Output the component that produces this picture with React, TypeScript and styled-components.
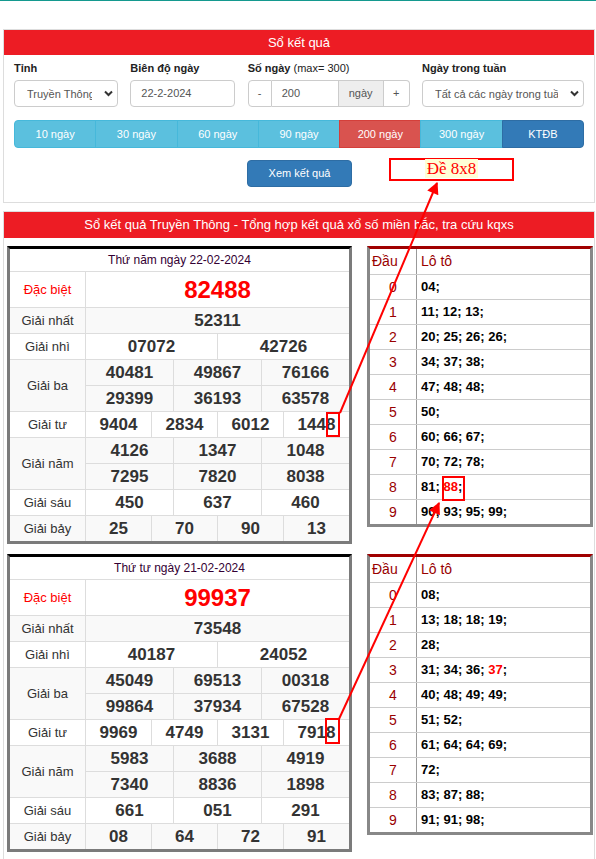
import React from 'react';
import styled, { createGlobalStyle } from 'styled-components';

const GlobalStyle = createGlobalStyle`
  html, body { margin: 0; padding: 0; background: #fff; }
  body {
    font-family: "Liberation Sans", Arial, sans-serif;
    font-size: 13px;
    color: #333;
  }
  * { box-sizing: border-box; }
`;

const Page = styled.div`
  position: relative;
  width: 596px;
  padding-bottom: 6px;
`;

const TopLine = styled.div`
  height: 1px;
  background: #14998f;
  margin-bottom: 28px;
`;

const Content = styled.div`
  padding: 0 1px 0 3px;
`;

const Panel = styled.div<{ $gap?: number }>`
  border: 1px solid #ddd;
  background: #fff;
  margin-top: ${p => p.$gap ?? 0}px;
`;

const PanelHead = styled.div<{ $h: number }>`
  background: #ed1c24;
  color: #fff;
  text-align: center;
  font-size: 13px;
  height: ${p => p.$h}px;
  line-height: ${p => p.$h}px;
  white-space: nowrap;
`;

const FormBody = styled.div`
  padding: 6px 10px 15px;
`;

const FieldRow = styled.div`
  display: grid;
  grid-template-columns: 104px 105px 162px 162px;
  justify-content: space-between;
`;

const Field = styled.div`
  display: flex;
  flex-direction: column;
`;

const FieldLabel = styled.div`
  font-size: 11px;
  font-weight: bold;
  line-height: 14px;
  color: #222;
  margin-bottom: 5px;
  white-space: nowrap;

  span { font-weight: normal; }
`;

const SelectBox = styled.div`
  display: flex;
  align-items: center;
  height: 27px;
  border: 1px solid #ccc;
  border-radius: 4px;
  padding: 0 4px 0 12px;
  color: #555;
  font-size: 11px;
  background: #fff;
`;

const SelectText = styled.span`
  flex: 1;
  overflow: hidden;
  white-space: nowrap;
`;

const Chevron = styled.svg`
  margin-left: 12px;
  flex: none;
`;

const TextInput = styled.div`
  height: 27px;
  border: 1px solid #ccc;
  border-radius: 4px;
  padding-left: 10px;
  line-height: 25px;
  color: #555;
  font-size: 11px;
`;

const InputGroup = styled.div`
  display: grid;
  grid-template-columns: 24px 67px 45px 26px;
  height: 27px;
`;

const GroupCell = styled.div<{ $addon?: boolean; $first?: boolean; $last?: boolean; $left?: boolean }>`
  border: 1px solid #ccc;
  border-left-width: ${p => (p.$first ? 1 : 0)}px;
  background: ${p => (p.$addon ? '#eee' : '#fff')};
  border-radius: ${p => (p.$first ? '4px 0 0 4px' : p.$last ? '0 4px 4px 0' : '0')};
  color: #555;
  font-size: 11px;
  line-height: 25px;
  text-align: ${p => (p.$left ? 'left' : 'center')};
  padding-left: ${p => (p.$left ? 10 : 0)}px;
`;

const RangeBar = styled.div`
  display: flex;
  margin-top: 13px;
`;

const RangeButton = styled.div<{ $tone: 'info' | 'danger' | 'primary' }>`
  flex: 1;
  height: 28px;
  line-height: 26px;
  text-align: center;
  color: #fff;
  font-size: 11px;
  background: ${p => (p.$tone === 'danger' ? '#d9534f' : p.$tone === 'primary' ? '#337ab7' : '#5bc0de')};
  border: 1px solid ${p => (p.$tone === 'danger' ? '#d43f3a' : p.$tone === 'primary' ? '#2e6da4' : '#46b8da')};
  margin-left: -1px;

  &:first-child { border-radius: 4px 0 0 4px; margin-left: 0; }
  &:last-child { border-radius: 0 4px 4px 0; }
`;

const ActionRow = styled.div`
  display: flex;
  align-items: flex-start;
  margin-top: 12px;
  padding-left: 233px;
`;

const ViewButton = styled.div`
  width: 105px;
  height: 27px;
  line-height: 25px;
  text-align: center;
  background: #337ab7;
  border: 1px solid #2e6da4;
  border-radius: 4px;
  color: #fff;
  font-size: 11px;
`;

const DeBox = styled.div`
  margin: -2px 0 0 37px;
  width: 125px;
  height: 23px;
  border: 2px solid #f00;
  text-align: center;
  line-height: 18px;
  font-family: "Liberation Serif", "Times New Roman", serif;
  font-size: 17px;
  color: #f00;

  span { background: #ffffd6; padding: 0 2px; }
`;

const ResultsBody = styled.div`
  padding: 8px 1px 0 3px;
`;

const Block = styled.div`
  display: grid;
  grid-template-columns: 345px 1fr;
  column-gap: 15px;
  align-items: start;
  margin-bottom: 10px;
`;

const ResultTable = styled.div`
  border: 3px solid #7b7b7b;
  border-top-color: #000;
  background: #fff;
`;

const DateTitle = styled.div`
  height: 22px;
  line-height: 22px;
  text-align: center;
  font-size: 12px;
  color: #303;
`;

const PrizeGrid = styled.div`
  display: grid;
  grid-template-columns: 75px repeat(12, 1fr);
`;

const PrizeLabel = styled.div<{ $rows: number; $special?: boolean; $shade?: boolean }>`
  grid-column: 1;
  grid-row: span ${p => p.$rows};
  display: flex;
  align-items: center;
  justify-content: center;
  border-top: 1px solid #ddd;
  font-size: 13px;
  color: ${p => (p.$special ? '#f00' : '#333')};
  background: ${p => (p.$shade ? '#f9f9f9' : '#fff')};
`;

const PrizeValue = styled.div<{ $span: number; $special?: boolean; $shade?: boolean }>`
  grid-column: span ${p => p.$span};
  height: ${p => (p.$special ? 36 : 26)}px;
  border-top: 1px solid #ddd;
  border-left: 1px solid #ddd;
  display: flex;
  align-items: center;
  justify-content: center;
  font-weight: bold;
  font-size: ${p => (p.$special ? 24 : 17)}px;
  color: ${p => (p.$special ? '#f00' : '#333')};
  background: ${p => (p.$shade ? '#f9f9f9' : '#fff')};
`;

const LotoTable = styled.div`
  border: 3px solid #888;
  border-top-color: #a00000;
  background: #fff;
`;

const LotoRow = styled.div<{ $head?: boolean }>`
  display: grid;
  grid-template-columns: 47px 1fr;
  height: ${p => (p.$head ? 25 : 25)}px;
  border-top: ${p => (p.$head ? 'none' : '1px solid #ccc')};
`;

const LotoHead = styled.div<{ $pad: number }>`
  color: #900;
  font-size: 14px;
  line-height: 24px;
  padding-left: ${p => p.$pad}px;
`;

const LotoDigit = styled.div`
  color: #900;
  font-size: 14px;
  text-align: center;
  line-height: 24px;
  border-right: 1px solid #999;
`;

const LotoHeadDigit = styled(LotoHead)`
  border-right: 1px solid #999;
`;

const LotoNums = styled.div`
  font-size: 13px;
  font-weight: bold;
  color: #000;
  line-height: 24px;
  padding-left: 4px;
  white-space: nowrap;
`;

const Hot = styled.span`
  color: #f00;
`;

const Overlay = styled.svg`
  position: absolute;
  top: 0;
  left: 0;
  pointer-events: none;
`;

type Draw = {
  date: string;
  db: string;
  nhat: string[];
  nhi: string[];
  ba: string[];
  tu: string[];
  nam: string[];
  sau: string[];
  bay: string[];
  loto: { n: string; hot?: boolean }[][];
};

const L = (s: string, hot: string[] = []) =>
  s ? s.split(' ').map(n => ({ n, hot: hot.includes(n) })) : [];

const DRAWS: Draw[] = [
  {
    date: 'Thứ năm ngày 22-02-2024',
    db: '82488',
    nhat: ['52311'],
    nhi: ['07072', '42726'],
    ba: ['40481', '49867', '76166', '29399', '36193', '63578'],
    tu: ['9404', '2834', '6012', '1448'],
    nam: ['4126', '1347', '1048', '7295', '7820', '8038'],
    sau: ['450', '637', '460'],
    bay: ['25', '70', '90', '13'],
    loto: [
      L('04'), L('11 12 13'), L('20 25 26 26'), L('34 37 38'), L('47 48 48'),
      L('50'), L('60 66 67'), L('70 72 78'), L('81 88', ['88']), L('90 93 95 99'),
    ],
  },
  {
    date: 'Thứ tư ngày 21-02-2024',
    db: '99937',
    nhat: ['73548'],
    nhi: ['40187', '24052'],
    ba: ['45049', '69513', '00318', '99864', '37934', '67528'],
    tu: ['9969', '4749', '3131', '7918'],
    nam: ['5983', '3688', '4919', '7340', '8836', '1898'],
    sau: ['661', '051', '291'],
    bay: ['08', '64', '72', '91'],
    loto: [
      L('08'), L('13 18 18 19'), L('28'), L('31 34 36 37', ['37']), L('40 48 49 49'),
      L('51 52'), L('61 64 64 69'), L('72'), L('83 87 88'), L('91 91 98'),
    ],
  },
];

const RANGES: { label: string; tone: 'info' | 'danger' | 'primary' }[] = [
  { label: '10 ngày', tone: 'info' },
  { label: '30 ngày', tone: 'info' },
  { label: '60 ngày', tone: 'info' },
  { label: '90 ngày', tone: 'info' },
  { label: '200 ngày', tone: 'danger' },
  { label: '300 ngày', tone: 'info' },
  { label: 'KTĐB', tone: 'primary' },
];

function ChevronIcon() {
  return (
    <Chevron width="9" height="7" viewBox="0 0 9 7">
      <polyline points="1,1.5 4.5,5 8,1.5" fill="none" stroke="#333" strokeWidth="2" />
    </Chevron>
  );
}

function Prize({ label, values, perRow, shade, special }: {
  label: string; values: string[]; perRow: number; shade?: boolean; special?: boolean;
}) {
  const rows = Math.ceil(values.length / perRow);
  return (
    <>
      <PrizeLabel $rows={rows} $shade={shade} $special={special}>{label}</PrizeLabel>
      {values.map((v, i) => (
        <PrizeValue key={i} $span={12 / perRow} $shade={shade} $special={special}>{v}</PrizeValue>
      ))}
    </>
  );
}

function DrawBlock({ d }: { d: Draw }) {
  return (
    <Block>
      <ResultTable>
        <DateTitle>{d.date}</DateTitle>
        <PrizeGrid>
          <Prize label="Đặc biệt" values={[d.db]} perRow={1} special />
          <Prize label="Giải nhất" values={d.nhat} perRow={1} shade />
          <Prize label="Giải nhì" values={d.nhi} perRow={2} />
          <Prize label="Giải ba" values={d.ba} perRow={3} shade />
          <Prize label="Giải tư" values={d.tu} perRow={4} />
          <Prize label="Giải năm" values={d.nam} perRow={3} shade />
          <Prize label="Giải sáu" values={d.sau} perRow={3} />
          <Prize label="Giải bảy" values={d.bay} perRow={4} shade />
        </PrizeGrid>
      </ResultTable>
      <LotoTable>
        <LotoRow $head>
          <LotoHeadDigit $pad={2}>Đầu</LotoHeadDigit>
          <LotoHead $pad={4}>Lô tô</LotoHead>
        </LotoRow>
        {d.loto.map((nums, i) => (
          <LotoRow key={i}>
            <LotoDigit>{i}</LotoDigit>
            <LotoNums>
              {nums.map((x, j) => (
                <React.Fragment key={j}>
                  {x.hot ? <Hot>{x.n}</Hot> : x.n}
                  {j < nums.length - 1 ? '; ' : ';'}
                </React.Fragment>
              ))}
            </LotoNums>
          </LotoRow>
        ))}
      </LotoTable>
    </Block>
  );
}

export default function App() {
  return (
    <Page>
      <GlobalStyle />
      <TopLine />
      <Content>
        <Panel>
          <PanelHead $h={25}>Sổ kết quả</PanelHead>
          <FormBody>
            <FieldRow>
              <Field>
                <FieldLabel>Tỉnh</FieldLabel>
                <SelectBox>
                  <SelectText>Truyền Thông</SelectText>
                  <ChevronIcon />
                </SelectBox>
              </Field>
              <Field>
                <FieldLabel>Biên độ ngày</FieldLabel>
                <TextInput>22-2-2024</TextInput>
              </Field>
              <Field>
                <FieldLabel>Số ngày <span>(max= 300)</span></FieldLabel>
                <InputGroup>
                  <GroupCell $first>-</GroupCell>
                  <GroupCell $left>200</GroupCell>
                  <GroupCell $addon>ngày</GroupCell>
                  <GroupCell $last>+</GroupCell>
                </InputGroup>
              </Field>
              <Field>
                <FieldLabel>Ngày trong tuần</FieldLabel>
                <SelectBox>
                  <SelectText>Tất cả các ngày trong tuần</SelectText>
                  <ChevronIcon />
                </SelectBox>
              </Field>
            </FieldRow>
            <RangeBar>
              {RANGES.map(r => (
                <RangeButton key={r.label} $tone={r.tone}>{r.label}</RangeButton>
              ))}
            </RangeBar>
            <ActionRow>
              <ViewButton>Xem kết quả</ViewButton>
              <DeBox><span>Đề 8x8</span></DeBox>
            </ActionRow>
          </FormBody>
        </Panel>

        <Panel $gap={8}>
          <PanelHead $h={26}>
            Sổ kết quả Truyền Thông - Tổng hợp kết quả xổ số miền bắc, tra cứu kqxs
          </PanelHead>
          <ResultsBody>
            {DRAWS.map(d => (
              <DrawBlock key={d.date} d={d} />
            ))}
          </ResultsBody>
        </Panel>
      </Content>

      <Overlay width="596" height="859" viewBox="0 0 596 859">
        <defs>
          <marker id="tip" viewBox="0 0 10 10" refX="9" refY="5" markerWidth="14" markerHeight="12"
            markerUnits="userSpaceOnUse" orient="auto">
            <path d="M0,0 L10,5 L0,10 z" fill="#f00" />
          </marker>
        </defs>
        <g fill="none" stroke="#f00" strokeWidth="2">
          <rect x="327" y="413" width="12" height="23" />
          <line x1="340" y1="413" x2="437" y2="183" markerEnd="url(#tip)" />
          <rect x="443" y="477" width="21" height="23" />
          <rect x="326" y="719" width="13" height="24" />
          <line x1="339" y1="719" x2="439" y2="503" markerEnd="url(#tip)" />
        </g>
      </Overlay>
    </Page>
  );
}
